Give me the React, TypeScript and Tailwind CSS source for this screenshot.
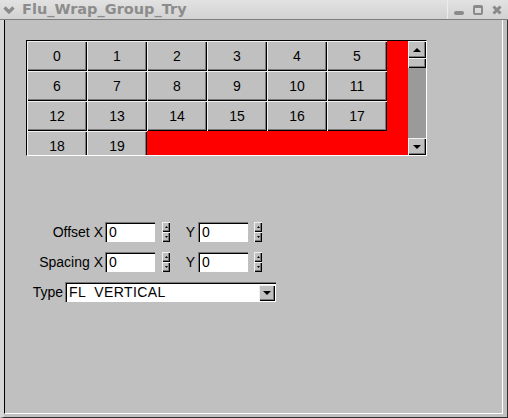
import React from "react";

const upBox =
  "bg-[#c0c0c0] shadow-[inset_1px_1px_0_#f0f0f0,inset_-1px_-1px_0_#000000,inset_-2px_-2px_0_#7a7a7a]";
const downBox =
  "bg-white border-t border-l border-[#7a7a7a] border-b-white border-r-white shadow-[inset_1px_1px_0_#000000]";

const Tri = ({ dir, w, h }: { dir: "up" | "down"; w: number; h: number }) => (
  <svg width={w} height={h} viewBox={`0 0 ${w} ${h}`}>
    <polygon
      points={dir === "up" ? `0,${h} ${w / 2},0 ${w},${h}` : `0,0 ${w},0 ${w / 2},${h}`}
      fill="#000"
    />
  </svg>
);

const Spinner = () => (
  <div className="flex flex-col w-[8px] h-[20px]">
    <div className={`${upBox} h-[10px] flex items-center justify-center`}>
      <Tri dir="up" w={3} h={2} />
    </div>
    <div className={`${upBox} h-[10px] flex items-center justify-center`}>
      <Tri dir="down" w={3} h={2} />
    </div>
  </div>
);

const Input = () => (
  <div className={`${downBox} w-[50px] h-[20px] pl-[3px] leading-[18px]`}>0</div>
);

const SpinRow = ({ label }: { label: string }) => (
  <div className="flex items-center h-[20px]">
    <span className="w-[98px] text-right">{label}</span>
    <div className="ml-[2px]">
      <Input />
    </div>
    <div className="ml-[7px]">
      <Spinner />
    </div>
    <span className="w-[25px] text-right">Y</span>
    <div className="ml-[3px]">
      <Input />
    </div>
    <div className="ml-[6px]">
      <Spinner />
    </div>
  </div>
);

const App = () => {
  const cells = Array.from({ length: 20 }, (_, i) => i);

  return (
    <div
      className="w-[508px] h-[418px] bg-[#c0c0c0] flex flex-col overflow-hidden text-[14px] text-black"
      style={{ fontFamily: '"Liberation Sans", Arial, sans-serif' }}
    >
      {/* title bar */}
      <div className="h-[20px] flex items-center border-b border-[#7c7c7c] bg-gradient-to-b from-[#e2e2e2] to-[#d2d2d2]">
        <svg className="ml-[3px]" width="12" height="10" viewBox="0 0 12 10">
          <polyline points="1.5,2.5 6,7 10.5,2.5" fill="none" stroke="#8a8a8a" strokeWidth="3.2" />
        </svg>
        <span
          className="ml-[7px] text-[14.5px] font-bold text-[#8c8c8c]"
          style={{ fontFamily: '"DejaVu Sans", sans-serif' }}
        >
          Flu_Wrap_Group_Try
        </span>
        <div className="ml-auto h-full border-l border-[#ececec] flex items-center gap-[9px] pl-[6px] pr-[6px]">
          <div className="w-[10px] h-[4px] mt-[7px] rounded-[2px] bg-[#8a8a8a]" />
          <div className="w-[10px] h-[10px] border-2 border-[#8a8a8a] border-t-[3px] rounded-[2px]" />
          <svg width="10" height="10" viewBox="0 0 10 10">
            <path d="M1.5 1.5 L8.5 8.5 M8.5 1.5 L1.5 8.5" stroke="#8a8a8a" strokeWidth="3" />
          </svg>
        </div>
      </div>

      {/* window body */}
      <div className="flex-1 flex flex-col border-l-[4px] border-l-[#d6d6d6] border-r border-b border-r-[#303030] border-b-[#303030]">
        <div className="flex-1 flex flex-col pr-[4px] pb-[3px]">
          <div className="flex-1 flex flex-col border-l border-l-black border-r border-b border-r-white border-b-white">
            {/* wrap group in scroll */}
            <div className="ml-[21px] mt-[20px] flex w-[401px] h-[116px] border-t border-l border-t-black border-l-black border-b border-r border-b-white border-r-white">
              <div className="w-[381px] h-[114px] bg-[#ff0000] overflow-hidden">
                <div className="grid grid-cols-[repeat(6,60px)] auto-rows-[30px]">
                  {cells.map((n) => (
                    <div key={n} className={`${upBox} flex items-center justify-center`}>
                      {n}
                    </div>
                  ))}
                </div>
              </div>
              <div className="w-[18px] flex flex-col">
                <div className={`${upBox} h-[17px] flex items-center justify-center`}>
                  <Tri dir="up" w={8} h={4} />
                </div>
                <div className={`${upBox} h-[10px]`} />
                <div className="flex-1 bg-[#9a9a9a]" />
                <div className={`${upBox} h-[17px] flex items-center justify-center`}>
                  <Tri dir="down" w={8} h={4} />
                </div>
              </div>
            </div>

            {/* controls */}
            <div className="mt-[66px] flex flex-col gap-[10px]">
              <SpinRow label="Offset X" />
              <SpinRow label="Spacing X" />
              <div className="flex items-center h-[20px]">
                <span className="w-[58px] text-right">Type</span>
                <div className={`${downBox} ml-[2px] w-[211px] h-[20px] flex items-center`}>
                  <span className="pl-[3px] whitespace-pre tracking-[0.4px]">FL  VERTICAL</span>
                  <div className={`${upBox} ml-auto mr-[1px] w-[16px] h-[16px] flex items-center justify-center`}>
                    <Tri dir="down" w={8} h={4} />
                  </div>
                </div>
              </div>
            </div>
          </div>
        </div>
      </div>
    </div>
  );
};

export default App;
